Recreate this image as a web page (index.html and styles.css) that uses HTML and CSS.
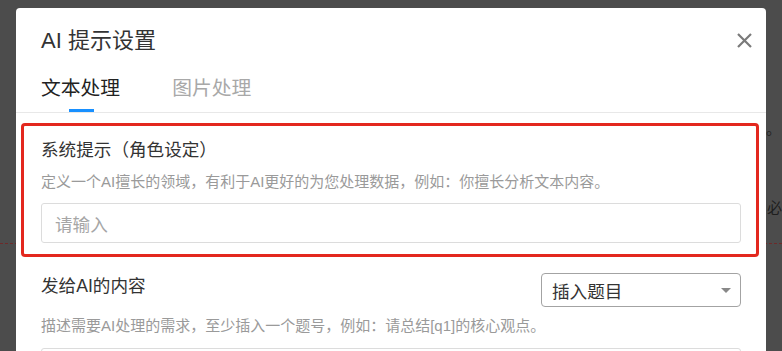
FILE: index.html
```html
<!DOCTYPE html>
<html lang="zh-CN">
<head>
<meta charset="utf-8">
<title>AI 提示设置</title>
<link rel="stylesheet" href="styles.css">
</head>
<body>
<div class="page">
  <div class="page-text">容。引</div>
  <div class="page-row"><span class="page-badge">1</span><span class="page-req">必</span></div>
  <div class="page-dash"></div>
</div>

<div class="modal">
  <div class="modal-header">
    <h2 class="modal-title">AI 提示设置</h2>
    <button class="modal-close" aria-label="关闭">
      <svg width="15" height="15" viewBox="0 0 15 15"><path d="M1 1 L14 14 M14 1 L1 14" stroke="#7a7a7a" stroke-width="2.2" fill="none"/></svg>
    </button>
  </div>
  <div class="tabs">
    <div class="tab tab-active">文本处理</div>
    <div class="tab">图片处理</div>
  </div>
  <div class="modal-body">
    <section class="field field-marked">
      <div class="field-label">系统提示（角色设定）</div>
      <div class="field-desc">定义一个AI擅长的领域，有利于AI更好的为您处理数据，例如：你擅长分析文本内容。</div>
      <div class="input"><span class="placeholder">请输入</span></div>
      <div class="mark"></div>
    </section>
    <section class="field field-second">
      <div class="field-head">
        <div class="field-label">发给AI的内容</div>
        <div class="select"><span>插入题目</span><span class="caret"></span></div>
      </div>
      <div class="field-desc">描述需要AI处理的需求，至少插入一个题号，例如：请总结[q1]的核心观点。</div>
      <div class="input input-tall"></div>
    </section>
  </div>
</div>
</body>
</html>
```

FILE: styles.css
```css
* { box-sizing: border-box; }
html, body { margin: 0; padding: 0; }
body {
  width: 782px;
  height: 351px;
  overflow: hidden;
  background: #4c4c4c;
  font-family: "Liberation Sans", "Noto Sans CJK SC", sans-serif;
  position: relative;
}
.page { padding-top: 119px; }
.page-text {
  margin-left: 751px;
  white-space: nowrap;
  font-size: 15px;
  line-height: 20px;
  color: #222;
}
.page-row {
  margin-top: 56px;
  margin-left: 757px;
  display: flex;
  align-items: center;
  gap: 3px;
  white-space: nowrap;
  height: 22px;
}
.page-badge {
  width: 14px;
  height: 20px;
  background: #1c4468;
  color: #1c4468;
  font-size: 10px;
}
.page-req { font-size: 15px; color: #1e1e1e; }
.page-dash {
  margin-top: 26px;
  border-top: 1px dashed #6e2a2a;
}

.modal {
  position: absolute;
  left: 16px;
  top: 8px;
  width: 750px;
  height: 343px;
  overflow: hidden;
  background: #fff;
  border-radius: 4px 4px 0 0;
}
.modal-header {
  display: flex;
  justify-content: space-between;
  align-items: flex-start;
  padding: 18px 14px 0 25px;
}
.modal-title {
  margin: 0;
  font-size: 22px;
  line-height: 30px;
  font-weight: normal;
  color: #333;
}
.modal-close {
  border: 0;
  background: none;
  padding: 0;
  margin-top: 7px;
  width: 15px;
  height: 15px;
  display: flex;
}
.tabs {
  display: flex;
  gap: 52px;
  padding: 0 25px;
  margin-top: 18px;
  border-bottom: 1px solid #e8e8e8;
}
.tab {
  position: relative;
  font-size: 19.8px;
  line-height: 28px;
  padding-bottom: 10px;
  color: #a8a8a8;
}
.tab-active { color: #222; }
.tab-active::after {
  content: "";
  position: absolute;
  left: 50%;
  bottom: 0;
  width: 25px;
  margin-left: -12px;
  height: 3px;
  background: #1890ff;
}
.modal-body { padding: 0 25px; }
.field { position: relative; }
.field-marked { padding: 25px 0 14px; }
.field-label {
  font-size: 17.6px;
  line-height: 24px;
  color: #333;
}
.field-desc {
  margin-top: 10px;
  font-size: 15px;
  line-height: 20px;
  color: #9a9a9a;
  white-space: nowrap;
}
.input {
  margin-top: 11px;
  height: 40px;
  border: 1px solid #dcdcdc;
  border-radius: 3px;
  padding-left: 13px;
  display: flex;
  align-items: center;
}
.placeholder { font-size: 17.6px; color: #a6a6a6; }
.mark {
  position: absolute;
  top: 10px;
  bottom: 0;
  left: -20px;
  right: -18px;
  border: 3.5px solid #e3281e;
  border-radius: 4px;
  pointer-events: none;
}
.field-second { margin-top: 16px; }
.field-head {
  display: flex;
  justify-content: space-between;
  align-items: flex-start;
}
.field-head .field-label { line-height: 26px; }
.select {
  width: 200px;
  height: 34px;
  border: 1px solid #a3a3a3;
  border-radius: 4px;
  display: flex;
  align-items: center;
  justify-content: space-between;
  padding: 0 9px 0 10px;
  font-size: 17.6px;
  color: #333;
}
.caret {
  width: 0;
  height: 0;
  border-left: 5px solid transparent;
  border-right: 5px solid transparent;
  border-top: 5px solid #888;
}
.field-second .field-desc { margin-top: 9px; }
.input-tall { margin-top: 12px; height: 80px; }
```
